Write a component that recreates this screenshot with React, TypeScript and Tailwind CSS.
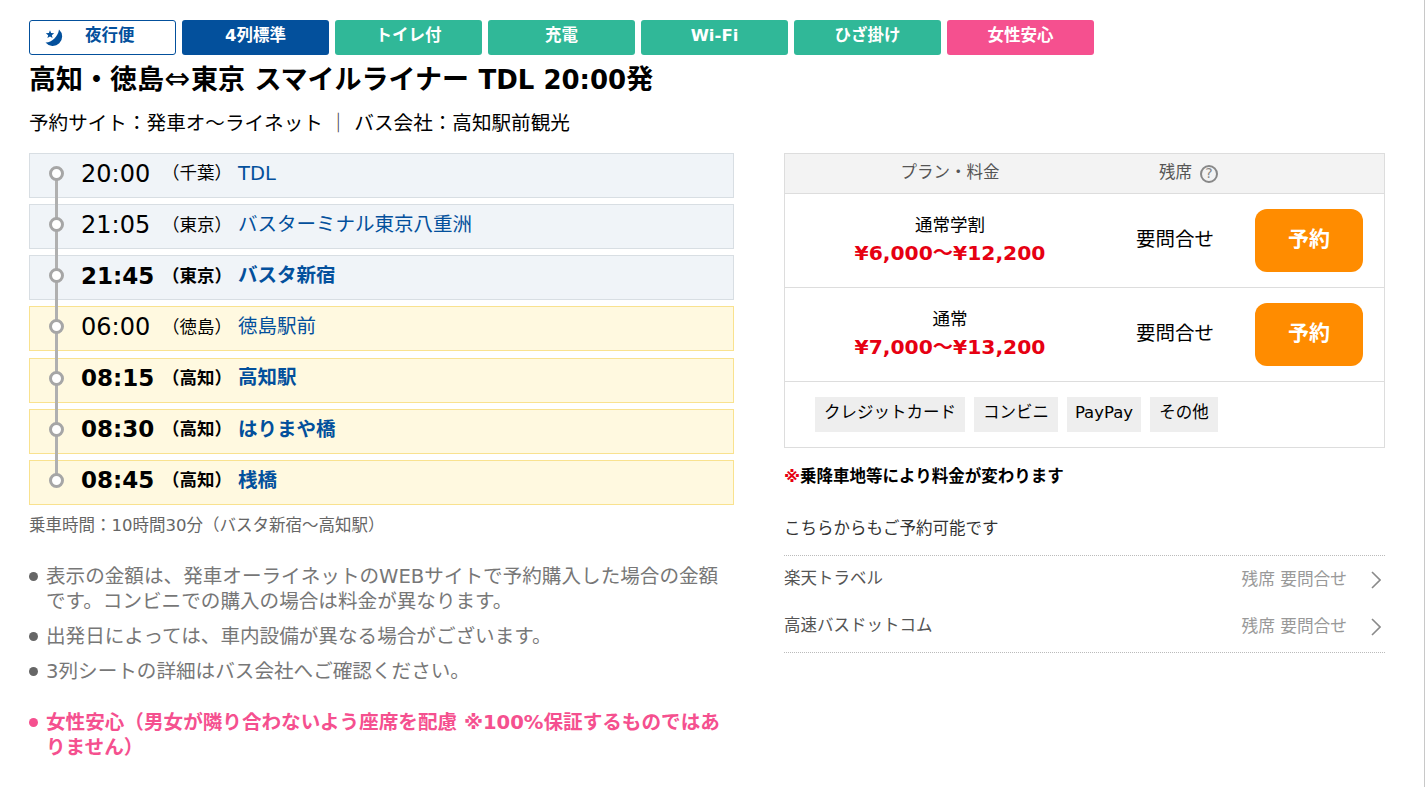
const font = '[font-family:"DejaVu_Sans","Noto_Sans_CJK_JP",sans-serif]';

const badges = [
  { label: "4列標準", cls: "bg-[#03509c]" },
  { label: "トイレ付", cls: "bg-[#30b898]" },
  { label: "充電", cls: "bg-[#30b898]" },
  { label: "Wi-Fi", cls: "bg-[#30b898]" },
  { label: "ひざ掛け", cls: "bg-[#30b898]" },
  { label: "女性安心", cls: "bg-[#f5508f]" },
];

const stops = [
  { time: "20:00", area: "千葉", name: "TDL", bold: false, arrive: false },
  { time: "21:05", area: "東京", name: "バスターミナル東京八重洲", bold: false, arrive: false },
  { time: "21:45", area: "東京", name: "バスタ新宿", bold: true, arrive: false },
  { time: "06:00", area: "徳島", name: "徳島駅前", bold: false, arrive: true },
  { time: "08:15", area: "高知", name: "高知駅", bold: true, arrive: true },
  { time: "08:30", area: "高知", name: "はりまや橋", bold: true, arrive: true },
  { time: "08:45", area: "高知", name: "桟橋", bold: true, arrive: true },
];

const plans = [
  { name: "通常学割", price: "¥6,000〜¥12,200" },
  { name: "通常", price: "¥7,000〜¥13,200" },
];

const payments = [
  { label: "クレジットカード", cls: "w-[150px]" },
  { label: "コンビニ", cls: "w-[84px]" },
  { label: "PayPay", cls: "w-[74px]" },
  { label: "その他", cls: "w-[68px]" },
];

function Moon() {
  return (
    <svg viewBox="0 0 19 18" className="w-[19px] h-[18px] shrink-0">
      <path d="M14 .5A9.4 9.4 0 1 1 .5 13.5C6 14 13 8 14 .5z" fill="#03509c" />
      <path d="M5 1.200L6.100 4l3.100.2-2.400 2 .8 2.900L5 7.500 2.400 9.100l.8-2.900-2.400-2L3.900 4z" fill="#03509c" />
    </svg>
  );
}

function Chevron() {
  return (
    <svg viewBox="0 0 10 18" className="w-[10px] h-[18px]" fill="none" stroke="#8a8a8a" strokeWidth="1.6">
      <path d="M1 1l8 8-8 8" />
    </svg>
  );
}

function Bullet({ pink, children }: { pink?: boolean; children: React.ReactNode }) {
  return (
    <li className="flex">
      <span className={`mt-[8px] mr-[8px] w-[9px] h-[9px] rounded-full shrink-0 ${pink ? "bg-[#f5508f]" : "bg-[#666666]"}`} />
      <span>{children}</span>
    </li>
  );
}

export default function App() {
  return (
    <div className={`${font} w-[1425px] h-[787px] overflow-hidden bg-white text-black pl-[29px] pt-[20px] border-r border-[#c8c8c8]`}>
      {/* Badges */}
      <div className="flex gap-[6px]">
        <div className="w-[147px] h-[35px] rounded-[3px] border border-[#03509c] flex items-center pl-[15px]">
          <Moon />
          <span className="ml-[21px] pb-[2px] text-[16.5px] font-bold text-[#03509c]">夜行便</span>
        </div>
        {badges.map((b) => (
          <div key={b.label} className={`w-[147px] h-[35px] pb-[2px] rounded-[3px] flex items-center justify-center text-[16.5px] font-bold text-white ${b.cls}`}>
            {b.label}
          </div>
        ))}
      </div>

      <h1 className="mt-[7px] h-[36px] text-[27px] leading-[36px] font-bold whitespace-nowrap">
        高知・徳島<span className="inline-block w-[27px] text-center text-[31px] leading-[20px] font-normal">⇔</span>東京 スマイルライナー <span className="text-[26px]">TDL 20:00</span>発
      </h1>
      <p className="mt-[12px] h-[28px] text-[19.6px] leading-[28px] whitespace-nowrap">
        予約サイト：発車オ〜ライネット <span className="inline-block ml-[-0.6px] leading-[20px] text-[#333333]">｜</span> バス会社：高知駅前観光
      </p>

      <div className="mt-[15px] flex">
        {/* Timetable */}
        <div className="w-[705px] shrink-0">
          <div className="relative flex flex-col gap-[6.15px]">
            <div className="absolute z-10 left-[26px] top-[20px] bottom-[24px] w-[3px] bg-[#b0b0b0]" />
            {stops.map((s) => (
              <div
                key={s.time}
                className={`relative h-[45px] pb-[4px] border flex items-center ${s.arrive ? "bg-[#fff9e0] border-[#f9e28f]" : "bg-[#f0f4f8] border-[#d8dee3]"}`}
              >
                <span className="absolute z-20 left-[19px] top-[12px] w-[15px] h-[15px] rounded-full border-[3px] border-[#a6a6a6] bg-white" />
                <span className={`ml-[51px] w-[81px] shrink-0 ${s.bold ? "text-[23px] font-bold" : "text-[24px]"}`}>{s.time}</span>
                <span className={`text-[17.5px] w-[76px] shrink-0 ${s.bold ? "font-bold" : ""}`}>（{s.area}）</span>
                <span className={`text-[19.5px] text-[#03509c] ${s.bold ? "font-bold" : ""}`}>{s.name}</span>
              </div>
            ))}
          </div>
          <p className="mt-[9px] text-[16.5px] leading-[24px] text-[#666666]">乗車時間：10時間30分（バスタ新宿〜高知駅）</p>
          <ul className="mt-[26px] flex flex-col gap-[10px] text-[19.6px] leading-[25px] text-[#777777]">
            <Bullet>表示の金額は、発車オーライネットのWEBサイトで予約購入した場合の金額です。コンビニでの購入の場合は料金が異なります。</Bullet>
            <Bullet>出発日によっては、車内設備が異なる場合がございます。</Bullet>
            <Bullet>3列シートの詳細はバス会社へご確認ください。</Bullet>
          </ul>
          <ul className="mt-[26px] text-[19.6px] leading-[25px] font-bold text-[#f5508f]">
            <Bullet pink>女性安心（男女が隣り合わないよう座席を配慮 ※100%保証するものではありません）</Bullet>
          </ul>
        </div>

        {/* Plans */}
        <div className="ml-[50px] w-[601px] shrink-0">
          <div className="border border-[#dddddd]">
            <div className="h-[40px] bg-[#f3f3f3] border-b border-[#dddddd] flex items-center text-[16.5px] text-[#555555]">
              <span className="w-[330px] text-center">プラン・料金</span>
              <span className="ml-[44px]">残席</span>
              <span className="ml-[8px] w-[18px] h-[18px] rounded-full border-2 border-[#888888] flex items-center justify-center text-[14px] text-[#888888]">?</span>
            </div>
            {plans.map((p) => (
              <div key={p.name} className="h-[94px] border-b border-[#dddddd] flex items-center">
                <div className="w-[330px] pb-[2px] text-center">
                  <div className="text-[17.5px] leading-[26px]">{p.name}</div>
                  <div className="text-[20.3px] leading-[30px] font-bold text-[#e60012]">{p.price}</div>
                </div>
                <div className="ml-[21px] pb-[2px] text-[19.5px]">要問合せ</div>
                <button className="ml-[41px] w-[108px] h-[63px] rounded-[12px] pb-[2px] bg-[#ff8c00] text-white text-[21px] font-bold">予約</button>
              </div>
            ))}
            <div className="h-[65px] flex items-center gap-[9px] pl-[30px] text-[16.5px]">
              {payments.map((m) => (
                <span key={m.label} className={`h-[35px] pb-[3px] bg-[#eeeeee] flex items-center justify-center ${m.cls}`}>{m.label}</span>
              ))}
            </div>
          </div>
          <p className="mt-[17px] text-[16.5px] leading-[24px] font-bold"><span className="text-[#e60012]">※</span>乗降車地等により料金が変わります</p>
          <p className="mt-[28px] text-[16.5px] leading-[24px] text-[#333333]">こちらからもご予約可能です</p>
          <div className="mt-[14px] border-t border-b border-dotted border-[#bbbbbb] pb-[2px]">
            {["楽天トラベル", "高速バスドットコム"].map((n) => (
              <div key={n} className="h-[47px] flex items-center">
                <span className="text-[16.5px] text-[#555555]">{n}</span>
                <span className="ml-auto text-[16.7px] text-[#999999]">残席 要問合せ</span>
                <span className="ml-[24px] mr-[4px] flex"><Chevron /></span>
              </div>
            ))}
          </div>
        </div>
      </div>
    </div>
  );
}
